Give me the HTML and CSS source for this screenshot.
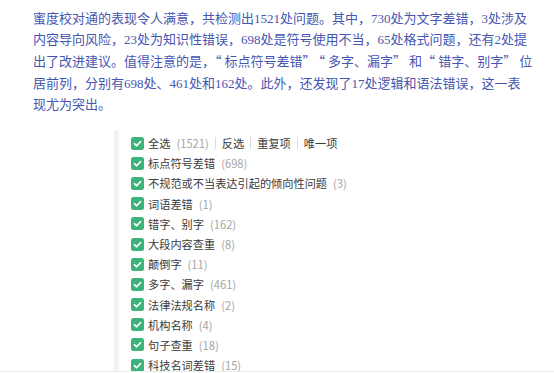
FILE: index.html
```html
<!DOCTYPE html>
<html lang="zh-CN">
<head>
  <meta charset="UTF-8">
  <title>校对结果</title>
  <meta name="viewport" content="width=device-width, initial-scale=1.0">
  <link rel="stylesheet" href="styles.css">
</head>
<body>

  <p class="summary">蜜度校对通的表现令人满意，共检测出1521处问题。其中，730处为文字差错，3处涉及内容导向风险，23处为知识性错误，698处是符号使用不当，65处格式问题，还有2处提<br>出了改进建议。值得注意的是，<span class="q">“</span>标点符号差错<span class="q">”“</span>多字、漏字<span class="q">”</span>和<span class="q">“</span>错字、别字<span class="q">”</span>位<br>居前列，分别有698处、461处和162处。此外，还发现了17处逻辑和语法错误，这一表现尤为突出。</p>

  <div class="figure">
    <div class="panel">
      <ul class="checks">
        <li>
          <span class="box"><svg viewBox="0 0 13 13"><rect width="13" height="13" rx="2.5"/><path d="M3.4 6.7l2.2 2.1 4-4.2"/></svg></span>
          全选<span class="count">(1521)</span>
          <span class="link">反选</span><span class="link">重复项</span><span class="link">唯一项</span>
        </li>
        <li><span class="box"><svg viewBox="0 0 13 13"><rect width="13" height="13" rx="2.5"/><path d="M3.4 6.7l2.2 2.1 4-4.2"/></svg></span>标点符号差错<span class="count">(698)</span></li>
        <li><span class="box"><svg viewBox="0 0 13 13"><rect width="13" height="13" rx="2.5"/><path d="M3.4 6.7l2.2 2.1 4-4.2"/></svg></span>不规范或不当表达引起的倾向性问题<span class="count">(3)</span></li>
        <li><span class="box"><svg viewBox="0 0 13 13"><rect width="13" height="13" rx="2.5"/><path d="M3.4 6.7l2.2 2.1 4-4.2"/></svg></span>词语差错<span class="count">(1)</span></li>
        <li><span class="box"><svg viewBox="0 0 13 13"><rect width="13" height="13" rx="2.5"/><path d="M3.4 6.7l2.2 2.1 4-4.2"/></svg></span>错字、别字<span class="count">(162)</span></li>
        <li><span class="box"><svg viewBox="0 0 13 13"><rect width="13" height="13" rx="2.5"/><path d="M3.4 6.7l2.2 2.1 4-4.2"/></svg></span>大段内容查重<span class="count">(8)</span></li>
        <li><span class="box"><svg viewBox="0 0 13 13"><rect width="13" height="13" rx="2.5"/><path d="M3.4 6.7l2.2 2.1 4-4.2"/></svg></span>颠倒字<span class="count">(11)</span></li>
        <li><span class="box"><svg viewBox="0 0 13 13"><rect width="13" height="13" rx="2.5"/><path d="M3.4 6.7l2.2 2.1 4-4.2"/></svg></span>多字、漏字<span class="count">(461)</span></li>
        <li><span class="box"><svg viewBox="0 0 13 13"><rect width="13" height="13" rx="2.5"/><path d="M3.4 6.7l2.2 2.1 4-4.2"/></svg></span>法律法规名称<span class="count">(2)</span></li>
        <li><span class="box"><svg viewBox="0 0 13 13"><rect width="13" height="13" rx="2.5"/><path d="M3.4 6.7l2.2 2.1 4-4.2"/></svg></span>机构名称<span class="count">(4)</span></li>
        <li><span class="box"><svg viewBox="0 0 13 13"><rect width="13" height="13" rx="2.5"/><path d="M3.4 6.7l2.2 2.1 4-4.2"/></svg></span>句子查重<span class="count">(18)</span></li>
        <li><span class="box"><svg viewBox="0 0 13 13"><rect width="13" height="13" rx="2.5"/><path d="M3.4 6.7l2.2 2.1 4-4.2"/></svg></span>科技名词差错<span class="count">(15)</span></li>
      </ul>
    </div>
  </div>

</body>
</html>
```

FILE: styles.css
```css
body {
  margin: 0;
  background: #fff;
  overflow: hidden;
}

.summary {
  margin: 0;
  padding: 8px 0 0 33px;
  width: 500px;
  font-family: 'Liberation Serif', 'Noto Sans CJK SC', serif;
  font-size: 13px;
  line-height: 21.2px;
  color: #4656b0;
}

/* quotes take a full cell, as in the source document */
.summary .q {
  font-family: 'Noto Sans CJK SC', sans-serif;
  letter-spacing: 3px;
}

.figure {
  margin-top: 15px;
  border-bottom: 1px solid #ececec;
}

.panel {
  margin-left: 114px;
  height: 241px;
  border-left: 5px solid #f3f3f3;
  overflow: hidden;
}

.checks {
  list-style: none;
  margin: 0;
  padding: 3px 0 0 12px;
  font-family: 'Noto Sans CJK SC', sans-serif;
  font-size: 11.2px;
  color: #3a3a3a;
}

.checks li {
  display: flex;
  align-items: center;
  height: 20.2px;
  white-space: nowrap;
}

.box {
  display: flex;
  width: 13px;
  height: 13px;
  margin-right: 4px;
}

.box svg {
  width: 13px;
  height: 13px;
}

.box rect {
  fill: #3cb37b;
}

.box path {
  fill: none;
  stroke: #fff;
  stroke-width: 1.6;
  stroke-linecap: round;
  stroke-linejoin: round;
}

.count {
  margin-left: 6px;
  color: #a5a5a5;
}

.link {
  padding: 0 6px;
  border-left: 1px solid #dcdcdc;
  line-height: 12px;
}

.count + .link {
  margin-left: 6px;
}
```
